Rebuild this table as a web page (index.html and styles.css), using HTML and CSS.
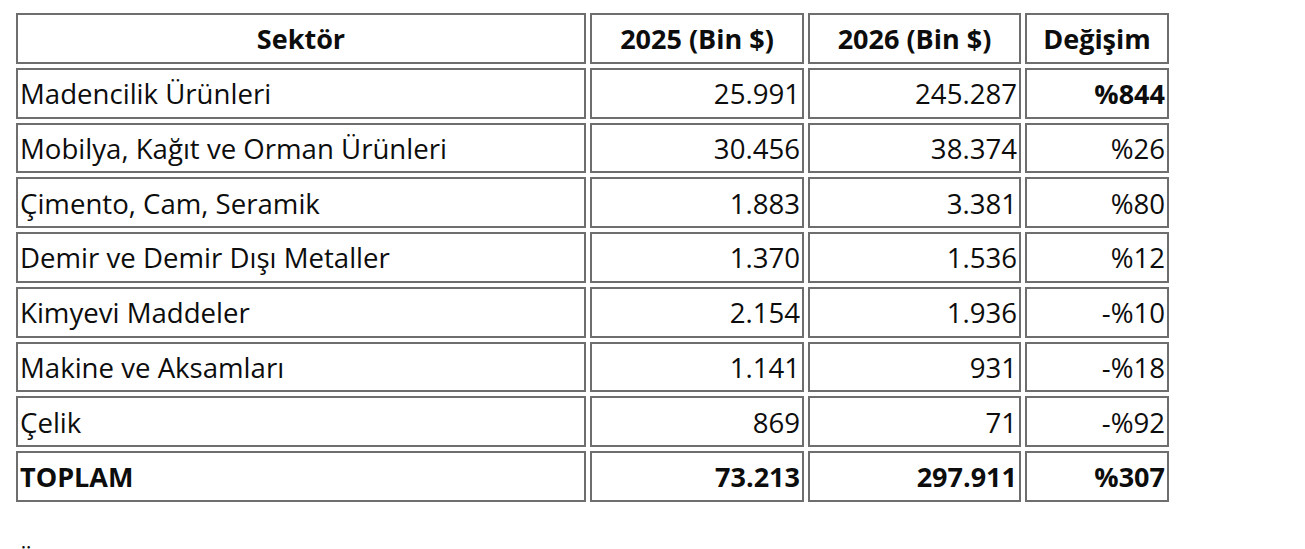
FILE: index.html
```html
<!DOCTYPE html>
<html lang="tr">
<head>
<meta charset="utf-8">
<title>Sektör</title>
<link rel="stylesheet" href="styles.css">
</head>
<body>
<table class="data">
  <colgroup>
    <col class="c1"><col class="c2"><col class="c3"><col class="c4">
  </colgroup>
  <thead>
    <tr class="head">
      <th>Sektör</th>
      <th>2025 (Bin $)</th>
      <th>2026 (Bin $)</th>
      <th>Değişim</th>
    </tr>
  </thead>
  <tbody>
    <tr><td>Madencilik Ürünleri</td><td class="num">25.991</td><td class="num">245.287</td><td class="num strong">%844</td></tr>
    <tr><td>Mobilya, Kağıt ve Orman Ürünleri</td><td class="num">30.456</td><td class="num">38.374</td><td class="num">%26</td></tr>
    <tr><td>Çimento, Cam, Seramik</td><td class="num">1.883</td><td class="num">3.381</td><td class="num">%80</td></tr>
    <tr><td>Demir ve Demir Dışı Metaller</td><td class="num">1.370</td><td class="num">1.536</td><td class="num">%12</td></tr>
    <tr><td>Kimyevi Maddeler</td><td class="num">2.154</td><td class="num">1.936</td><td class="num">-%10</td></tr>
    <tr><td>Makine ve Aksamları</td><td class="num">1.141</td><td class="num">931</td><td class="num">-%18</td></tr>
    <tr><td>Çelik</td><td class="num">869</td><td class="num">71</td><td class="num">-%92</td></tr>
    <tr class="total"><td>TOPLAM</td><td class="num">73.213</td><td class="num">297.911</td><td class="num">%307</td></tr>
  </tbody>
</table>
<p class="after">Ülke bazında ihracat</p>
</body>
</html>
```
FILE: styles.css
```css
html, body {
  margin: 0;
  padding: 0;
  background: #ffffff;
}
body {
  font-family: "Open Sans", "Noto Sans", sans-serif;
  font-size: 27.6px;
  color: #0d0d0d;
  height: 549px;
  overflow: hidden;
}
.data {
  border-collapse: separate;
  border-spacing: 4px 4px;
  table-layout: fixed;
  width: 1161px;
  margin: 9px 0 0 12px;
}
.c1 { width: 570px; }
.c2 { width: 214px; }
.c3 { width: 213px; }
.c4 { width: 144px; }
.data th,
.data td {
  box-sizing: border-box;
  height: 50.75px;
  padding: 0 2px;
  border: 2px solid #6e6e6e;
  vertical-align: middle;
  white-space: nowrap;
  text-align: left;
  font-weight: 400;
}
.data .head th {
  font-weight: 700;
  font-size: 27px;
  text-align: center;
}
.data .num {
  text-align: right;
}
.data .strong,
.data .total td {
  font-weight: 700;
  font-size: 27px;
}
.after {
  margin: 36px 0 0 16px;
  line-height: 36.8px;
}
```
